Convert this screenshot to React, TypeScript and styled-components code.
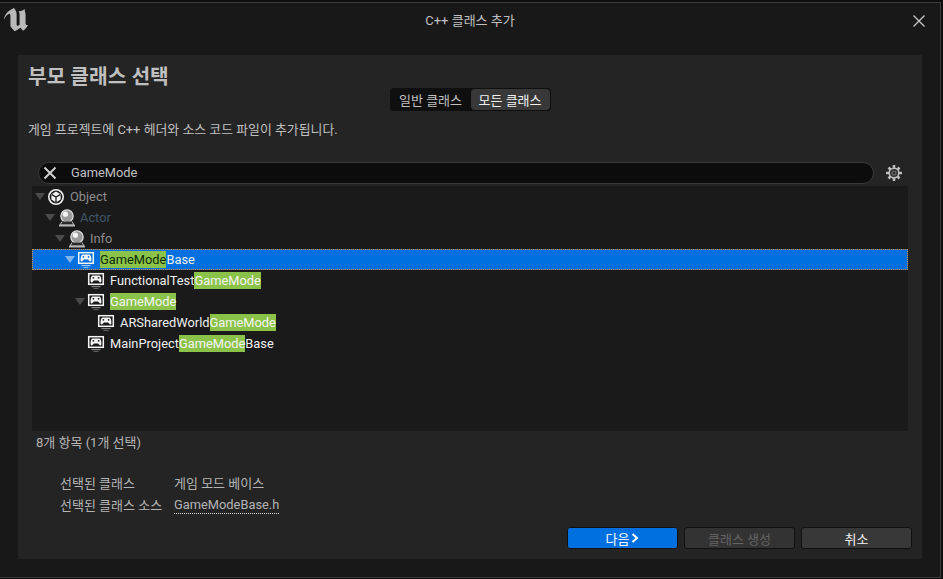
import React from "react";
import styled, { createGlobalStyle } from "styled-components";

const Global = createGlobalStyle`
  html, body { margin: 0; padding: 0; width: 943px; height: 579px; overflow: hidden; background: #0e0e0e; }
  body { font-family: Roboto, "Noto Sans CJK KR", sans-serif; }
`;

const Win = styled.div`
  box-sizing: border-box;
  width: 941px;
  height: 576px;
  margin-top: 2px;
  background: #181818;
  border-top: 1px solid #3b3b3b;
  border-right: 1px solid #3b3b3b;
  border-bottom: 1px solid #3b3b3b;
  display: flex;
  flex-direction: column;
`;

const TitleBar = styled.div`
  height: 52px;
  flex: none;
  display: grid;
  grid-template-columns: 60px 1fr 60px;
  align-items: start;
`;

const LogoSlot = styled.div`
  padding: 5px 0 0 4px;
  svg { display: block; }
`;

const Title = styled.div`
  margin-top: 9px;
  text-align: center;
  font-size: 13px;
  line-height: 17px;
  color: #c0c0c0;
`;

const CloseSlot = styled.div`
  display: flex;
  justify-content: flex-end;
  padding: 11px 14px 0 0;
  svg { display: block; }
`;

const Panel = styled.div`
  box-sizing: border-box;
  margin: 0 18px 0 18px;
  height: 504px;
  background: #242424;
  display: flex;
  flex-direction: column;
`;

const Heading = styled.h1`
  margin: 0;
  padding: 10px 0 0 10px;
  height: 23px;
  font-size: 20.3px;
  line-height: 24px;
  font-weight: 700;
  color: #c0c0c0;
`;

const Toggle = styled.div`
  align-self: center;
  box-sizing: border-box;
  height: 23px;
  display: flex;
  padding: 1px;
  border-radius: 4px;
  background: #0f0f0f;
`;

const ToggleItem = styled.div<{ $on?: boolean }>`
  box-sizing: border-box;
  height: 21px;
  width: ${(p) => (p.$on ? "79px" : "80px")};
  display: flex;
  align-items: center;
  justify-content: center;
  font-size: 13px;
  border-radius: 4px;
  color: ${(p) => (p.$on ? "#f0f0f0" : "#c0c0c0")};
  background: ${(p) => (p.$on ? "#383838" : "transparent")};
`;

const Desc = styled.div`
  margin: 10px 0 0 10px;
  font-size: 12.9px;
  line-height: 17px;
  color: #c0c0c0;
`;

const SearchRow = styled.div`
  margin: 24px 20px 0 20px;
  display: flex;
  align-items: center;
  gap: 12px;
  height: 22px;
`;

const SearchBox = styled.div`
  box-sizing: border-box;
  flex: 1;
  height: 22px;
  display: flex;
  align-items: center;
  background: #0c0c0c;
  border: 1px solid #383838;
  border-radius: 11px;
  font-size: 12.85px;
  color: #c0c0c0;
  padding-left: 4px;
  gap: 14px;
  svg { display: block; flex: none; }
`;

const SearchText = styled.span`
  padding-bottom: 2px;
`;

const Tree = styled.div`
  margin: 2px 14px 0 14px;
  height: 245px;
  background: #1a1a1a;
  display: flex;
  flex-direction: column;
  box-sizing: border-box;
`;

const Row = styled.div<{ $depth: number; $sel?: boolean; $dim?: string }>`
  box-sizing: border-box;
  flex: none;
  height: 21px;
  display: flex;
  align-items: center;
  padding-left: ${(p) => 3 + p.$depth * 10}px;
  font-size: 12.85px;
  color: ${(p) => p.$dim || "#f0f0f0"};
  background: ${(p) => (p.$sel ? "#0070e0" : "transparent")};
  outline: ${(p) => (p.$sel ? "1px dotted #e08a20" : "none")};
  outline-offset: -1px;
`;

const Arrow = styled.span<{ $show: boolean; $sel?: boolean }>`
  flex: none;
  width: 0;
  height: 0;
  margin: 0 2px 0 0;
  border-left: 5px solid transparent;
  border-right: 5px solid transparent;
  border-top: 7px solid ${(p) => (!p.$show ? "transparent" : p.$sel ? "#7fb6ee" : "#4a4a4a")};
`;

const IconSlot = styled.span`
  flex: none;
  width: 18px;
  height: 18px;
  margin: 0 5px 0 0;
  svg { display: block; }
`;

const Mark = styled.span<{ $sel?: boolean }>`
  background: #8bc34a;
  color: ${(p) => (p.$sel ? "#0d2a08" : "#f4f4f4")};
  line-height: 17px;
  display: inline-block;
`;

const Status = styled.div`
  margin: 3px 0 0 18px;
  font-size: 13px;
  line-height: 17px;
  color: #b4b4b4;
`;

const Details = styled.div`
  margin: 24px 0 0 42px;
  display: grid;
  grid-template-columns: 114px auto;
  justify-content: start;
  row-gap: 5px;
  font-size: 13px;
  line-height: 17px;
  color: #b4b4b4;
`;

const LinkText = styled.span`
  justify-self: start;
  border-bottom: 1px dotted #e0e0e0;
  line-height: 16px;
  font-size: 12.85px;
  height: 16px;
`;

const Buttons = styled.div`
  margin: 13px 10px 0 0;
  display: flex;
  justify-content: flex-end;
  gap: 6px;
`;

const Btn = styled.div<{ $kind?: "primary" | "disabled" }>`
  box-sizing: border-box;
  width: 111px;
  height: 22px;
  border-radius: 3px;
  border: 1px solid #111;
  display: flex;
  align-items: center;
  justify-content: center;
  gap: 2px;
  font-size: 13px;
  background: ${(p) => (p.$kind === "primary" ? "#0070e0" : p.$kind === "disabled" ? "#333333" : "#383838")};
  color: ${(p) => (p.$kind === "primary" ? "#fff" : p.$kind === "disabled" ? "#636363" : "#f0f0f0")};
  svg { display: block; }
`;

const UELogo = () => (
  <svg width="24" height="24" viewBox="4 8 24 24">
    <path
      fill="#b8b8b8"
      d="M14 8 C15.5 10 16.6 12 16.6 14 L16.6 24 C16.6 25.6 17.4 26.2 18.4 25.6 L19.6 24.8 L19.6 14 C19.6 13 19.2 12.2 18.6 11.5 C21 11 23 10.5 24.5 9 C25 12 25.6 13 25.6 15 L25.6 24 C26 25 26.8 25.4 28 24.8 C27 27.5 25 29.5 23 30.8 L20.5 27.8 C18.5 29 16.5 30.5 14.5 31.2 C13 29 11 28 10.4 26 L10.4 15.5 C10.4 14 9.6 13.4 8.8 13.8 C7 14.8 5.5 16.5 4 19.5 C4.5 15 7 11 14 8 Z"
    />
  </svg>
);

const CloseIcon = () => (
  <svg width="14" height="14" viewBox="0 0 14 14">
    <path d="M1.5 1.5 L12.5 12.5 M12.5 1.5 L1.5 12.5" stroke="#c8c8c8" strokeWidth="1.3" fill="none" />
  </svg>
);

const ClearIcon = () => (
  <svg width="14" height="14" viewBox="0 0 14 14">
    <path d="M1.5 1.5 L12.5 12.5 M12.5 1.5 L1.5 12.5" stroke="#d0d0d0" strokeWidth="2" fill="none" />
  </svg>
);

const GearIcon = () => (
  <svg width="16" height="16" viewBox="0 0 16 16" style={{ flex: "none" }}>
    <g stroke="#bdbdbd" strokeWidth="2.6">
      <path d="M8 0 V16 M0 8 H16 M2.5 2.5 L13.5 13.5 M13.5 2.5 L2.5 13.5" />
    </g>
    <circle cx="8" cy="8" r="5.6" fill="#bdbdbd" />
    <circle cx="8" cy="8" r="4" fill="#2c2c2c" />
    <circle cx="8" cy="8" r="2.6" fill="#666666" />
    <circle cx="8" cy="8" r="1.2" fill="#2c2c2c" />
  </svg>
);

const ObjectIcon = () => (
  <svg width="18" height="18" viewBox="0 0 18 18">
    <circle cx="9" cy="9" r="7.2" fill="none" stroke="#f2f2f2" strokeWidth="1.6" />
    <path d="M9 3.6 L13.6 6.2 V11.6 L9 14.4 L4.4 11.6 V6.2 Z" fill="#f2f2f2" />
    <path d="M9 9 V14 M9 9 L4.8 6.6 M9 9 L13.2 6.6" stroke="#1a1a1a" strokeWidth="1.3" fill="none" />
  </svg>
);

const ActorIcon = () => (
  <svg width="18" height="18" viewBox="0 0 18 18">
    <circle cx="10" cy="7" r="6.2" fill="#9a9a9a" stroke="#e8e8e8" strokeWidth="1.1" />
    <circle cx="8.4" cy="5.2" r="2.6" fill="#f4f4f4" />
    <path d="M5 12.5 L3 16 H17 L15 12.5" fill="#2a2a2a" stroke="#c4c4c4" strokeWidth="1" />
    <path d="M2 16.6 H18" stroke="#b8b8b8" strokeWidth="1.8" />
  </svg>
);

const GameModeIcon = ({ sel }: { sel?: boolean }) => {
  const hole = sel ? "#0070e0" : "#1a1a1a";
  return (
    <svg width="18" height="18" viewBox="0 0 18 18">
      <rect x="1.7" y="1.7" width="14.6" height="10.6" fill={hole} stroke="#f6f6f6" strokeWidth="1.5" />
      <path d="M5.6 3.6 H12.4 C13.8 3.6 14.6 7 14.4 9.4 C14.2 10.8 12.8 10.8 12 9.6 L11.2 8.4 H6.8 L6 9.6 C5.2 10.8 3.8 10.8 3.6 9.4 C3.4 7 4.2 3.6 5.6 3.6 Z" fill="#f6f6f6" />
      <circle cx="6.4" cy="5.8" r="0.9" fill={hole} />
      <circle cx="11.6" cy="5.8" r="0.9" fill={hole} />
      <path d="M4.5 14.6 H13.5" stroke={sel ? "#9fcbf5" : "#8a8a8a"} strokeWidth="1.1" />
      <path d="M6.5 16.5 H11.5" stroke={sel ? "#7fb6ee" : "#5e5e5e"} strokeWidth="1.1" />
    </svg>
  );
};

const ChevronIcon = () => (
  <svg width="8" height="10" viewBox="0 0 8 10">
    <path d="M1.5 1 L6 5 L1.5 9" fill="none" stroke="#fff" strokeWidth="2" />
  </svg>
);

type Part = { t: string; m?: boolean };
type Item = {
  depth: number;
  arrow: boolean;
  icon: "object" | "actor" | "gm";
  parts: Part[];
  color?: string;
  sel?: boolean;
};

const items: Item[] = [
  { depth: 0, arrow: true, icon: "object", parts: [{ t: "Object" }], color: "#8c8c8c" },
  { depth: 1, arrow: true, icon: "actor", parts: [{ t: "Actor" }], color: "#3f5667" },
  { depth: 2, arrow: true, icon: "actor", parts: [{ t: "Info" }], color: "#8c8c8c" },
  { depth: 3, arrow: true, icon: "gm", sel: true, parts: [{ t: "GameMode", m: true }, { t: "Base" }] },
  { depth: 4, arrow: false, icon: "gm", parts: [{ t: "FunctionalTest" }, { t: "GameMode", m: true }] },
  { depth: 4, arrow: true, icon: "gm", parts: [{ t: "GameMode", m: true }] },
  { depth: 5, arrow: false, icon: "gm", parts: [{ t: "ARSharedWorld" }, { t: "GameMode", m: true }] },
  { depth: 4, arrow: false, icon: "gm", parts: [{ t: "MainProject" }, { t: "GameMode", m: true }, { t: "Base" }] },
];

export default function App() {
  return (
    <>
      <Global />
      <Win>
        <TitleBar>
          <LogoSlot>
            <UELogo />
          </LogoSlot>
          <Title>C++ 클래스 추가</Title>
          <CloseSlot>
            <CloseIcon />
          </CloseSlot>
        </TitleBar>
        <Panel>
          <Heading>부모 클래스 선택</Heading>
          <Toggle>
            <ToggleItem>일반 클래스</ToggleItem>
            <ToggleItem $on>모든 클래스</ToggleItem>
          </Toggle>
          <Desc>게임 프로젝트에 C++ 헤더와 소스 코드 파일이 추가됩니다.</Desc>
          <SearchRow>
            <SearchBox>
              <ClearIcon />
              <SearchText>GameMode</SearchText>
            </SearchBox>
            <GearIcon />
          </SearchRow>
          <Tree>
            {items.map((it, i) => (
              <Row key={i} $depth={it.depth} $sel={it.sel} $dim={it.color}>
                <Arrow $show={it.arrow} $sel={it.sel} />
                <IconSlot>
                  {it.icon === "object" ? <ObjectIcon /> : it.icon === "actor" ? <ActorIcon /> : <GameModeIcon sel={it.sel} />}
                </IconSlot>
                <span>
                  {it.parts.map((p, j) =>
                    p.m ? (
                      <Mark key={j} $sel={it.sel}>
                        {p.t}
                      </Mark>
                    ) : (
                      <span key={j}>{p.t}</span>
                    ),
                  )}
                </span>
              </Row>
            ))}
          </Tree>
          <Status>8개 항목 (1개 선택)</Status>
          <Details>
            <span>선택된 클래스</span>
            <span>게임 모드 베이스</span>
            <span>선택된 클래스 소스</span>
            <LinkText>GameModeBase.h</LinkText>
          </Details>
          <Buttons>
            <Btn $kind="primary">
              다음
              <ChevronIcon />
            </Btn>
            <Btn $kind="disabled">클래스 생성</Btn>
            <Btn>취소</Btn>
          </Buttons>
        </Panel>
      </Win>
    </>
  );
}
